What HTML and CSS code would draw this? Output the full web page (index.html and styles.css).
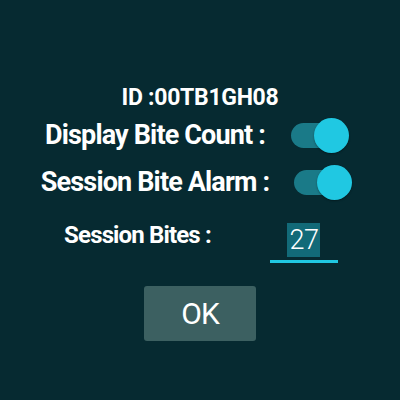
FILE: index.html
```html
<!DOCTYPE html>
<html>
<head>
<meta charset="utf-8">
<link rel="stylesheet" href="styles.css">
</head>
<body>
<main class="screen">
  <div class="row row-id"><span class="label id">ID :00TB1GH08</span></div>
  <div class="row row-t1">
    <span class="label big">Display Bite Count :</span>
    <span class="switch"><span class="track"></span><span class="thumb"></span></span>
  </div>
  <div class="row row-t2">
    <span class="label big">Session Bite Alarm :</span>
    <span class="switch"><span class="track"></span><span class="thumb"></span></span>
  </div>
  <div class="row row-bites">
    <span class="label mid">Session Bites :</span>
    <span class="field"><span class="value"><span class="sel">27</span></span><span class="underline"></span></span>
  </div>
  <div class="row row-ok"><button class="ok">OK</button></div>
</main>
</body>
</html>
```
FILE: styles.css
```css
html, body {
  margin: 0;
  padding: 0;
}
body {
  width: 400px;
  height: 400px;
  background: #062a31;
  font-family: Roboto, "Noto Sans", sans-serif;
  color: #ffffff;
  overflow: hidden;
}
.screen {
  display: flex;
  flex-direction: column;
  padding-top: 82px;
}
.row {
  display: flex;
  justify-content: center;
  align-items: center;
}
.label {
  font-weight: 700;
  white-space: nowrap;
}
.id {
  font-size: 23px;
  letter-spacing: -0.3px;
}
.row-id { height: 30px; }
.big {
  font-size: 27px;
  letter-spacing: -0.85px;
}
.row-t1 { height: 46px; gap: 26px; padding-right: 6px; }
.row-t2 { height: 48px; gap: 25px; padding-right: 7px; }
.switch {
  position: relative;
  width: 58px;
  height: 35px;
  display: inline-block;
}
.track {
  position: absolute;
  left: 0;
  top: 5px;
  width: 44px;
  height: 25px;
  border-radius: 13px;
  background: #1a7a88;
}
.thumb {
  position: absolute;
  right: 0;
  top: 0;
  width: 35px;
  height: 35px;
  border-radius: 50%;
  background: #20c8e2;
  box-shadow: 0 1px 2px rgba(0,0,0,0.35);
}
.row-bites {
  margin-top: 17px;
  align-items: flex-start;
  gap: 59px;
  padding-left: 2px;
}
.mid {
  font-size: 24px;
  line-height: 24px;
  letter-spacing: -0.85px;
}
.field {
  display: flex;
  flex-direction: column;
  align-items: center;
  width: 68px;
}
.value {
  height: 34px;
  display: flex;
  align-items: center;
}
.sel {
  background: #126a78;
  font-size: 27px;
  font-weight: 300;
  line-height: 34px;
  padding: 0 2px;
  letter-spacing: -0.5px;
}
.underline {
  margin-top: 3px;
  width: 68px;
  height: 3px;
  background: #20c8e2;
}
.row-ok { margin-top: 23px; }
.ok {
  width: 112px;
  height: 55px;
  border: none;
  border-radius: 3px;
  background: #3c6061;
  color: #ffffff;
  font-family: Roboto, sans-serif;
  font-size: 30px;
  font-weight: 400;
  letter-spacing: -1px;
  padding: 0;
}
```
